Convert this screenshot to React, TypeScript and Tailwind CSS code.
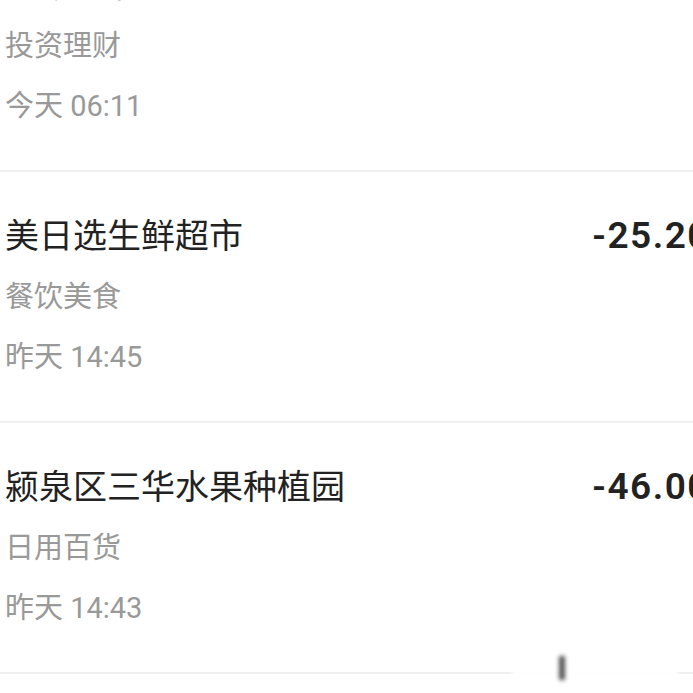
import React from 'react';

type Bill = {
  title: string;
  category: string;
  time: string;
  amount: string;
};

const bills: Bill[] = [
  { title: '余额宝收益', category: '投资理财', time: '今天 06:11', amount: '+0.12' },
  { title: '美日选生鲜超市', category: '餐饮美食', time: '昨天 14:45', amount: '-25.20' },
  { title: '颍泉区三华水果种植园', category: '日用百货', time: '昨天 14:43', amount: '-46.00' },
  { title: '美团外卖', category: '餐饮美食', time: '昨天 11:02', amount: '-18.50' },
];

const font = { fontFamily: 'Roboto, "Noto Sans CJK SC", sans-serif' };

const BillRow = ({ bill }: { bill: Bill }) => (
  <div className="flex items-start justify-between pl-[5px] pt-[34px] pb-[34px] border-b-2 border-[#efefef]">
    <div className="flex flex-col">
      <div className="text-[34px] leading-[60px] text-[#222222]">{bill.title}</div>
      <div className="text-[29px] leading-[61px] mt-[1px] text-[#999999]">{bill.category}</div>
      <div className="text-[29px] leading-[59px] text-[#999999]">{bill.time}</div>
    </div>
    <div className="text-[37px] leading-[60px] font-semibold text-[#222222] tracking-[1.5px] pr-[6px]">
      {bill.amount}
    </div>
  </div>
);

export default function App() {
  return (
    <div className="relative w-[693px] h-[693px] overflow-hidden bg-white" style={font}>
      <div className="w-[716px] -mt-[79px]">
        {bills.map((bill, i) => (
          <BillRow key={i} bill={bill} />
        ))}
      </div>
      {/* watermark over the last divider */}
      <div className="absolute left-[512px] top-[655px] w-[166px] h-[26px] bg-white/90 blur-[2px]" />
      <div className="absolute left-[559px] top-[656px] w-[6px] h-[24px] bg-[#555555] blur-[2px]" />
    </div>
  );
}
